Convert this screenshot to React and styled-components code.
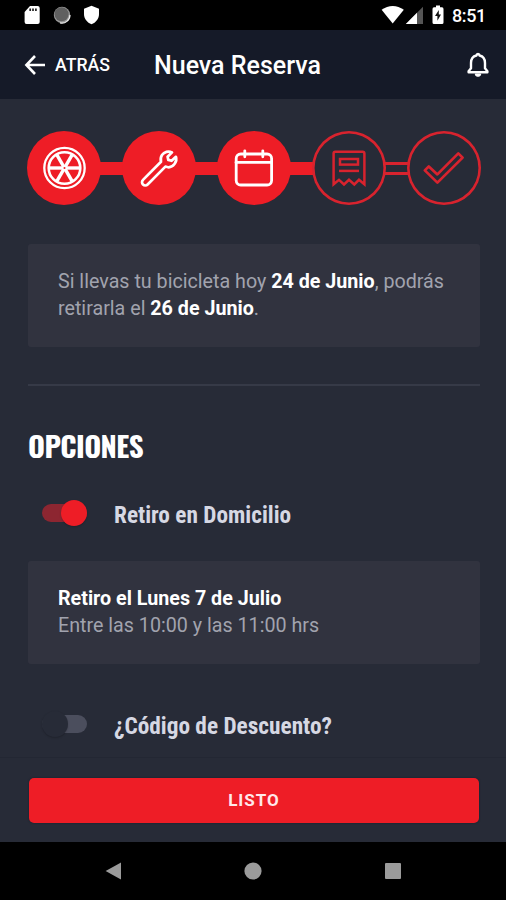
import React from "react";
import styled, { createGlobalStyle } from "styled-components";

const steps = [
  { icon: "wheel", done: true },
  { icon: "wrench", done: true },
  { icon: "calendar", done: true },
  { icon: "receipt", done: false },
  { icon: "check", done: false },
];

const StepIcon = ({ name }) => {
  if (name === "wheel") {
    return (
      <svg width="44" height="44" viewBox="0 0 44 44" fill="none" stroke="#fff">
        <circle cx="22.5" cy="22" r="20.2" strokeWidth="2.3" />
        <circle cx="22.5" cy="22" r="15.8" strokeWidth="2.6" />
        {[0, 60, 120].map((deg) => (
          <path key={deg} transform={`rotate(${deg} 22.5 22)`} d="M7 22 H38" strokeWidth="3.4" />
        ))}
        <circle cx="22.5" cy="22" r="2" strokeWidth="2" fill="#ee1d26" />
      </svg>
    );
  }
  if (name === "wrench") {
    return (
      <svg width="44" height="44" viewBox="0 0 44 44" fill="none" stroke="#fff" strokeWidth="2.7" strokeLinejoin="round" strokeLinecap="round">
        <path d="M35 6.4 C31.4 4.6 27.1 5.8 25 9 C23.6 11.2 23.4 13.6 24 15.8 L6 33.9 C4.7 35.2 4.7 37.2 6 38.5 C7.3 39.8 9.3 39.8 10.6 38.5 L28.4 20.6 C31.8 21.9 35.4 20.8 37.5 18 C39.4 15.5 39.7 13 38.9 10.8 L34.6 14.8 L31.3 13.9 L30.6 10.8 Z" />
      </svg>
    );
  }
  if (name === "calendar") {
    return (
      <svg width="44" height="44" viewBox="0 0 44 44" fill="none" stroke="#fff" strokeWidth="2.8" strokeLinecap="round">
        <rect x="4.2" y="8" width="35.4" height="31" rx="4.5" />
        <path d="M4 16.4 H39.6 M12.8 4.8 V10.8 M30.8 4.8 V10.8" />
      </svg>
    );
  }
  if (name === "receipt") {
    return (
      <svg width="44" height="44" viewBox="0 0 44 44" fill="none" stroke="#d8232e" strokeWidth="2.5">
        <path d="M6.6 38.3 V7.5 Q6.6 5.8 8.3 5.8 H35.7 Q37.4 5.8 37.4 7.5 V38.3 L32 33.8 L27.3 38.5 L22 33.8 L17 38.5 L12 33.8 Z" />
        <rect x="13" y="13" width="18" height="5.6" />
        <path d="M12 24.9 H32" />
      </svg>
    );
  }
  return (
    <svg width="44" height="44" viewBox="0 0 44 44" fill="none" stroke="#d8232e" strokeWidth="2.7" strokeLinejoin="round">
      <path d="M2.8 24.4 L6.8 20.4 L15.4 28.4 L36.3 7.4 L40.6 11.6 L15.4 36.6 Z" />
    </svg>
  );
};

const StepBar = () => (
  <StyledStepBar>
    {steps.map((step, index) => (
      <React.Fragment key={step.icon}>
        {index > 0 && <Connector $filled={steps[index - 1].done} />}
        <StepCircle $done={step.done}>
          <StepIcon name={step.icon} />
        </StepCircle>
      </React.Fragment>
    ))}
  </StyledStepBar>
);

const StatusBar = () => (
  <StyledStatusBar>
    <StatusGroup $gap="12px">
      <svg width="17" height="20" viewBox="0 0 17 20">
        <path d="M6 1 H13.5 Q15.7 1 15.7 3 V17 Q15.7 19 13.7 19 H2.5 Q.6 19 .6 17 V7 Z" fill="#fff" />
        <path d="M6.2 3.4 V6 M9 3.4 V6 M11.9 3.4 V6" stroke="#222" strokeWidth="1.7" />
      </svg>
      <svg width="18" height="20" viewBox="0 0 18 20">
        <circle cx="9" cy="10" r="8.2" fill="#999" />
        <path d="M17 10 A8 8 0 0 1 7 17.8" fill="none" stroke="#eee" strokeWidth="1.2" />
        <circle cx="8.6" cy="9.3" r="7" fill="#606060" />
      </svg>
      <svg width="17" height="20" viewBox="0 0 17 20">
        <path d="M8.5 .8 L16 3.8 V9 C16 14 12.8 17.6 8.5 19.2 C4.2 17.6 1 14 1 9 V3.8 Z" fill="#fff" />
      </svg>
    </StatusGroup>
    <StatusGroup $gap="0">
      <svg width="24" height="20" viewBox="0 0 24 20">
        <path d="M.6 4.7 C7.5 -.4 16 -.4 22.8 4.7 L11.7 18.6 Z" fill="#fff" />
      </svg>
      <svg width="19" height="20" viewBox="0 0 19 20">
        <path d="M18 1.8 V19 H.8 Z" fill="#555" />
        <path d="M12 7.8 V19 H.8 Z" fill="#fff" />
      </svg>
      <BatteryIcon width="12" height="20" viewBox="0 0 12 20">
        <path d="M4 .5 H8 V2.3 H10 Q11.5 2.3 11.5 4 V17.5 Q11.5 19 10 19 H2 Q.5 19 .5 17.5 V4 Q.5 2.3 2 2.3 H4 Z" fill="#fff" />
        <path d="M6.8 5 L3 11 H5.4 V15.8 L9 9.6 H6.8 Z" fill="#111" />
      </BatteryIcon>
      <Clock>8:51</Clock>
    </StatusGroup>
  </StyledStatusBar>
);

const App = () => (
  <>
    <GlobalStyle />
    <Screen>
      <StatusBar />
      <Header>
        <BackButton>
          <svg width="22" height="22" viewBox="0 0 22 22" fill="none" stroke="#fff" strokeWidth="2.6">
            <path d="M21 11 H3 M11 2 L2.4 11 L11 20" />
          </svg>
          ATRÁS
        </BackButton>
        <Title>Nueva Reserva</Title>
        <svg width="24" height="28" viewBox="0 0 24 28" fill="none" stroke="#fff" strokeWidth="2.4" strokeLinejoin="round">
          <path d="M12 3 C11 3 10.5 3.7 10.4 4.5 C7 5.3 5 8.2 5 12 V17.3 L2.6 20.2 V21.2 H21.4 V20.2 L19 17.3 V12 C19 8.2 17 5.3 13.6 4.5 C13.5 3.7 13 3 12 3 Z" />
          <path d="M9.2 23 H14.8 A2.8 2.3 0 0 1 9.2 23 Z" fill="#fff" strokeWidth="1" />
        </svg>
      </Header>
      <Content>
        <StepBar />
        <Card>
          Si llevas tu bicicleta hoy <strong>24 de Junio</strong>, podrás
          <br />
          retirarla el <strong>26 de Junio</strong>.
        </Card>
        <Divider />
        <SectionTitle>OPCIONES</SectionTitle>
        <OptionRow>
          <Switch $on />
          <OptionLabel>Retiro en Domicilio</OptionLabel>
        </OptionRow>
        <Card>
          <strong>Retiro el Lunes 7 de Julio</strong>
          <br />
          Entre las 10:00 y las 11:00 hrs
        </Card>
        <OptionRow $last>
          <Switch />
          <OptionLabel>¿Código de Descuento?</OptionLabel>
        </OptionRow>
      </Content>
      <Footer>
        <SubmitButton>LISTO</SubmitButton>
      </Footer>
      <NavBar>
        <svg width="18" height="20" viewBox="0 0 18 20">
          <path d="M17 1.4 V18.6 L1.6 10 Z" fill="#9b9b9b" />
        </svg>
        <svg width="18" height="20" viewBox="0 0 18 20">
          <circle cx="9" cy="10" r="8.6" fill="#9b9b9b" />
        </svg>
        <svg width="18" height="20" viewBox="0 0 18 20">
          <rect x="1" y="2" width="16" height="16" rx="1" fill="#9b9b9b" />
        </svg>
      </NavBar>
    </Screen>
  </>
);

const GlobalStyle = createGlobalStyle`
  * {
    box-sizing: border-box;
  }

  body {
    margin: 0;
    background: #272b37;
    font-family: Roboto, "Liberation Sans", sans-serif;
  }

  svg {
    display: block;
    flex: none;
  }
`;

const Screen = styled.div`
  display: flex;
  flex-direction: column;
  width: 506px;
  height: 900px;
  overflow: hidden;
  background: #272b37;
`;

const StyledStatusBar = styled.div`
  display: flex;
  justify-content: space-between;
  height: 30px;
  padding: 5px 20px 5px 24px;
  background: #000;
`;

const StatusGroup = styled.div`
  display: flex;
  align-items: center;
  gap: ${(props) => props.$gap};
`;

const BatteryIcon = styled.svg`
  margin-left: 8px;
`;

const Clock = styled.span`
  width: 34px;
  margin-left: 8px;
  padding-top: 2px;
  font-size: 18px;
  font-weight: 500;
  line-height: 20px;
  white-space: nowrap;
  color: #fff;
  letter-spacing: -0.4px;
`;

const Header = styled.header`
  display: flex;
  align-items: center;
  height: 69px;
  padding: 0 16px 0 24px;
  background: #151a28;
  color: #fff;
`;

const BackButton = styled.button`
  display: flex;
  align-items: center;
  gap: 9px;
  width: 130px;
  padding: 0;
  border: 0;
  background: none;
  font: 500 17.7px Roboto, sans-serif;
  color: #fff;
`;

const Title = styled.h1`
  flex: 1;
  margin: 0;
  padding-top: 2px;
  font-size: 25px;
  font-weight: 500;
`;

const Content = styled.main`
  display: flex;
  flex-direction: column;
  height: 658px;
  padding: 32px 26px 0 28px;
`;

const StyledStepBar = styled.div`
  display: flex;
  align-items: center;
  height: 74px;
  margin: 0 -1px 39px;
`;

const StepCircle = styled.div`
  display: flex;
  flex: none;
  align-items: center;
  justify-content: center;
  width: 74px;
  height: 74px;
  border-radius: 50%;
  background: ${(props) => (props.$done ? "#ee1d26" : "transparent")};
  box-shadow: ${(props) => (props.$done ? "none" : "inset 0 0 0 2.6px #d8232e")};
`;

const Connector = styled.div`
  flex: none;
  width: 23px;
  height: 13px;
  margin: 0 -1px;
  border: solid ${(props) => (props.$filled ? "#ee1d26" : "#d8232e")};
  border-width: 3px 0;
  background: ${(props) => (props.$filled ? "#ee1d26" : "transparent")};
`;

const Card = styled.section`
  flex: none;
  height: 103px;
  padding: 24px 30px;
  border-radius: 3px;
  background: #31333f;
  font-size: 19.7px;
  line-height: 27px;
  white-space: nowrap;
  color: #a1a3ae;

  strong {
    font-weight: 700;
    color: #fff;
  }
`;

const Divider = styled.hr`
  flex: none;
  width: 100%;
  height: 2px;
  margin: 37px 0 38px;
  border: 0;
  background: #363a47;
`;

const SectionTitle = styled.h2`
  flex: none;
  height: 42px;
  margin: 0;
  font-family: Oswald, Roboto, sans-serif;
  font-size: 29px;
  font-weight: 700;
  line-height: 41px;
  letter-spacing: -0.6px;
  color: #fff;
`;

const OptionRow = styled.div`
  display: flex;
  align-items: center;
  gap: 27px;
  height: 26px;
  margin: ${(props) => (props.$last ? "47px 0 0 14px" : "34px 0 35px 14px")};
`;

const Switch = styled.div`
  display: flex;
  align-items: center;
  justify-content: ${(props) => (props.$on ? "flex-end" : "flex-start")};
  width: 45px;
  height: 18px;
  border-radius: 9px;
  background: ${(props) => (props.$on ? "#8d2631" : "#4b4e5d")};

  &::before {
    content: "";
    width: 26px;
    height: 26px;
    flex: none;
    border-radius: 50%;
    background: ${(props) => (props.$on ? "#ee1d26" : "#272b37")};
    box-shadow: 0 1px 2px rgba(0, 0, 0, 0.2);
  }
`;

const OptionLabel = styled.span`
  padding-top: 4px;
  font-family: "Roboto Condensed", Roboto, sans-serif;
  font-size: 23.3px;
  font-weight: 700;
  line-height: 28px;
  white-space: nowrap;
  color: #d6d8e3;
`;

const Footer = styled.footer`
  height: 85px;
  padding: 20px 27px 0 29px;
  border-top: 1px solid #232733;
`;

const SubmitButton = styled.button`
  display: block;
  width: 100%;
  height: 45px;
  padding: 0 0 1px;
  border: 0;
  border-radius: 5px;
  background: #ee1d26;
  box-shadow: 0 0 2px #13202b;
  font: 700 17px Roboto, sans-serif;
  letter-spacing: 1px;
  color: #ffe9ea;
`;

const NavBar = styled.nav`
  display: flex;
  align-items: center;
  justify-content: space-between;
  height: 58px;
  padding: 0 104px;
  background: #000;
`;

export default App;
